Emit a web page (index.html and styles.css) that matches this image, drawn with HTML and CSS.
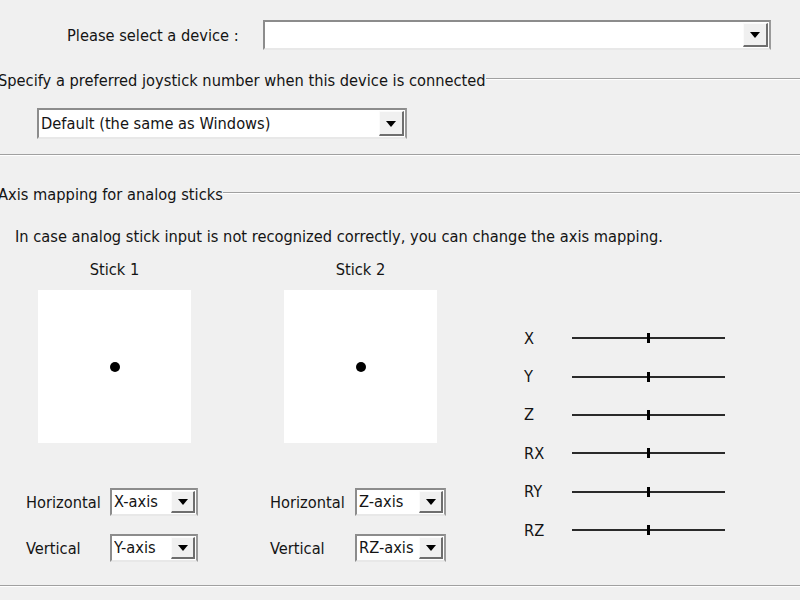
FILE: index.html
```html
<!DOCTYPE html>
<html>
<head>
<meta charset="utf-8">
<link rel="stylesheet" href="styles.css">
</head>
<body>
<div class="dlg">
  <div class="device-row">
    <span class="lbl">Please select a device :</span>
    <div class="combo wide"><span class="val"></span><span class="btn"><i class="arr"></i></span></div>
  </div>

  <div class="ghead g1head"><span class="gtitle">Specify a preferred joystick number when this device is connected</span><span class="gline"></span></div>
  <div class="combo def"><span class="val">Default (the same as Windows)</span><span class="btn"><i class="arr"></i></span></div>
  <div class="sep"></div>

  <div class="ghead g2head"><span class="gtitle">Axis mapping for analog sticks</span><span class="gline"></span></div>
  <p class="desc">In case analog stick input is not recognized correctly, you can change the axis mapping.</p>

  <div class="mapping">
    <div class="stick s1">
      <div class="padwrap">
        <div class="cap">Stick 1</div>
        <div class="pad"><i class="dot"></i></div>
      </div>
      <div class="axrow first"><span class="axl">Horizontal</span><div class="combo sm"><span class="val">X-axis</span><span class="btn"><i class="arr"></i></span></div></div>
      <div class="axrow second"><span class="axl">Vertical</span><div class="combo sm"><span class="val">Y-axis</span><span class="btn"><i class="arr"></i></span></div></div>
    </div>
    <div class="stick s2">
      <div class="padwrap">
        <div class="cap">Stick 2</div>
        <div class="pad"><i class="dot"></i></div>
      </div>
      <div class="axrow first"><span class="axl">Horizontal</span><div class="combo sm"><span class="val">Z-axis</span><span class="btn"><i class="arr"></i></span></div></div>
      <div class="axrow second"><span class="axl">Vertical</span><div class="combo sm"><span class="val">RZ-axis</span><span class="btn"><i class="arr"></i></span></div></div>
    </div>
    <div class="sliders">
      <div class="srow"><span class="sl">X</span><span class="track"><i class="tick"></i></span></div>
      <div class="srow"><span class="sl">Y</span><span class="track"><i class="tick"></i></span></div>
      <div class="srow"><span class="sl">Z</span><span class="track"><i class="tick"></i></span></div>
      <div class="srow"><span class="sl">RX</span><span class="track"><i class="tick"></i></span></div>
      <div class="srow"><span class="sl">RY</span><span class="track"><i class="tick"></i></span></div>
      <div class="srow"><span class="sl">RZ</span><span class="track"><i class="tick"></i></span></div>
    </div>
  </div>
  <div class="sep bottom"></div>
</div>
</body>
</html>
```

FILE: styles.css
```css
html, body {
  margin: 0;
  padding: 0;
  background: #f0f0f0;
}
body {
  width: 800px;
  height: 600px;
  overflow: hidden;
  font-family: "DejaVu Sans Condensed", "DejaVu Sans", sans-serif;
  font-size: 16.3px;
  color: #141414;
}
.dlg {
  display: flex;
  flex-direction: column;
  width: 800px;
}

/* combo boxes */
.combo {
  display: flex;
  box-sizing: border-box;
  background: #fff;
  border-style: solid;
  border-width: 2px;
  border-color: #8c8c8c #9a9a9a #e8e8e8 #8c8c8c;
  padding: 1px 1px 1px 2px;
}
.combo .val {
  flex: 1;
  display: flex;
  align-items: center;
  white-space: nowrap;
  overflow: hidden;
  line-height: 20px;
}
.combo .btn {
  box-sizing: border-box;
  width: 25px;
  background: #f0f0f0;
  border-style: solid;
  border-width: 1px 2px 2px 1px;
  border-color: #fbfbfb #6e6e6e #6e6e6e #fbfbfb;
  display: flex;
  align-items: center;
  justify-content: center;
}
.arr {
  width: 0;
  height: 0;
  border-left: 5px solid transparent;
  border-right: 5px solid transparent;
  border-top: 6px solid #000;
  margin-top: 1px;
}

/* device row */
.device-row {
  display: flex;
  align-items: center;
  padding-top: 20px;
  padding-left: 67px;
}
.lbl { line-height: 20px; margin-top: 2px; }
.combo.wide {
  margin-left: 24px;
  width: 508px;
  height: 30px;
}

/* group headers */
.ghead {
  display: flex;
  align-items: center;
  height: 18px;
  margin-left: -2px;
}
.gtitle {
  white-space: nowrap;
  line-height: 18px;
}
.gline {
  flex: 1;
  height: 0;
  border-top: 1px solid #a0a0a0;
  border-bottom: 1px solid #ffffff;
  margin-top: -5px;
}
.g1head { margin-top: 22px; }
.combo.def {
  margin-top: 18px;
  margin-left: 37px;
  width: 370px;
  height: 31px;
}
.sep {
  height: 0;
  border-top: 1px solid #a0a0a0;
  border-bottom: 1px solid #ffffff;
  margin-top: 15px;
}
.g2head { margin-top: 30px; }
.desc {
  margin: 23px 0 0 15px;
  line-height: 20px;
}

/* mapping */
.mapping {
  display: flex;
  margin-top: 13px;
  padding-left: 26px;
}
.stick { display: flex; flex-direction: column; }
.s1 { width: 244px; }
.s2 { width: 254px; }
.s1 .padwrap { margin-left: 12px; }
.s2 .padwrap { margin-left: 14px; }
.padwrap { width: 153px; }
.cap {
  text-align: center;
  line-height: 20px;
}
.pad {
  margin-top: 10px;
  width: 153px;
  height: 153px;
  background: #fff;
  display: flex;
  align-items: center;
  justify-content: center;
}
.dot {
  width: 10px;
  height: 10px;
  border-radius: 50%;
  background: #000;
}
.axrow {
  display: flex;
  align-items: center;
}
.axrow.first { margin-top: 45px; }
.axrow.second { margin-top: 18px; }
.s1 .axl { width: 84px; }
.s2 .axl { width: 85px; }
.combo.sm { height: 28px; }
.s1 .combo.sm { width: 88px; }
.s2 .combo.sm { width: 91px; }
.combo.sm .btn { width: 24px; }

.sliders {
  display: flex;
  flex-direction: column;
  padding-top: 59px;
}
.srow {
  display: flex;
  align-items: center;
  height: 38.4px;
}
.sl { width: 48px; }
.track {
  position: relative;
  width: 153px;
  height: 2px;
  background: #2a2a2a;
}
.tick {
  position: absolute;
  left: 75px;
  top: -4px;
  width: 3px;
  height: 10px;
  background: #000;
}
.sep.bottom { margin-top: 23px; }
```
